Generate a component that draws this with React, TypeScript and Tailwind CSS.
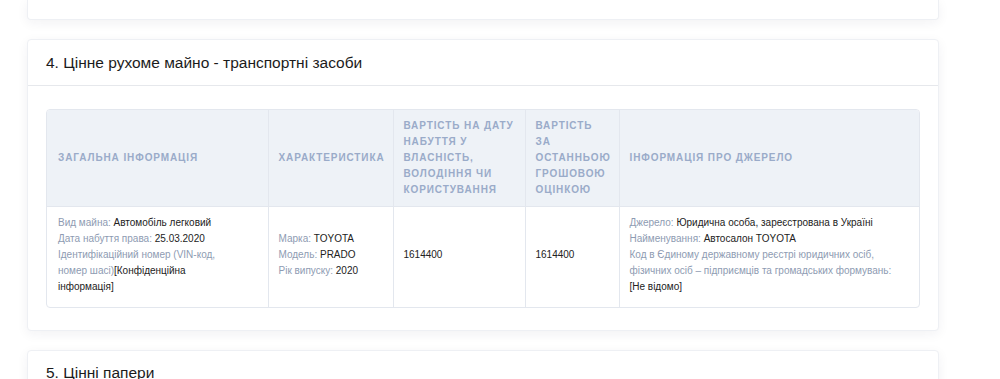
const labelCls = 'text-[#8e9bb2]';
const valueCls = 'text-[#222]';

const Line = ({ label, value }: { label: string; value: string }) => (
	<div>
		<span className={labelCls}>{label}: </span>
		<span className={valueCls}>{value}</span>
	</div>
);

const headers = [
	'Загальна інформація',
	'Характеристика',
	'Вартість на дату набуття у власність, володіння чи користування',
	'Вартість за останньою грошовою оцінкою',
	'Інформація про джерело',
];

const Card = ({ title, children }: { title: string; children?: React.ReactNode }) => (
	<div className="ml-[27px] w-[912px] bg-white rounded-[4px] border border-[#eef0f4] shadow-[0_3px_12px_rgba(30,40,70,0.06)]">
		<div className="h-[46px] flex items-center px-[18px] border-b border-[#e6e8ec]">
			<h3 className="text-[15.5px] text-[#1b1b1b]">{title}</h3>
		</div>
		{children}
	</div>
);

const App = () => {
	return (
		<div className="min-h-screen bg-white font-['Liberation_Sans',Arial,sans-serif]">
			<div className="ml-[27px] w-[912px] h-[20px] bg-white rounded-b-[4px] border border-t-0 border-[#eef0f4] shadow-[0_3px_12px_rgba(30,40,70,0.06)]" />
			<div className="h-[19px]" />
			<Card title="4. Цінне рухоме майно - транспортні засоби">
				<div className="px-[18px] pt-[23px] pb-[22px]">
					<div className="border border-[#e3e7ee] rounded-[4px] overflow-hidden">
						<table className="w-full table-fixed border-collapse text-[10px] leading-4">
							<colgroup>
								<col className="w-[221px]" />
								<col className="w-[125px]" />
								<col className="w-[132px]" />
								<col className="w-[94px]" />
								<col />
							</colgroup>
							<thead>
								<tr className="bg-[#eef2f7] h-[96px]">
									{headers.map((h, i) => (
										<th
											key={i}
											className={`text-left align-middle font-bold uppercase tracking-[0.9px] text-[#9aabc9] px-[10px] py-2 ${i > 0 ? 'border-l border-[#e3e7ee]' : 'pl-[11px]'}`}
										>
											{h}
										</th>
									))}
								</tr>
							</thead>
							<tbody>
								<tr className="h-[100px] border-t border-[#e3e7ee]">
									<td className="align-middle pl-[11px] pr-[24px] pt-[6px] pb-[10px]">
										<Line label="Вид майна" value="Автомобіль легковий" />
										<Line label="Дата набуття права" value="25.03.2020" />
										<div>
											<span className={labelCls}>Ідентифікаційний номер (VIN-код, номер шасі)</span>
											<span className={valueCls}>[Конфіденційна інформація]</span>
										</div>
									</td>
									<td className="align-middle px-[10px] pt-[6px] pb-[10px] border-l border-[#e3e7ee]">
										<Line label="Марка" value="TOYOTA" />
										<Line label="Модель" value="PRADO" />
										<Line label="Рік випуску" value="2020" />
									</td>
									<td className="align-middle px-[10px] pt-[6px] pb-[10px] border-l border-[#e3e7ee] text-[#222]">1614400</td>
									<td className="align-middle px-[10px] pt-[6px] pb-[10px] border-l border-[#e3e7ee] text-[#222]">1614400</td>
									<td className="align-middle px-[10px] pt-[6px] pb-[10px] border-l border-[#e3e7ee]">
										<Line label="Джерело" value="Юридична особа, зареєстрована в Україні" />
										<Line label="Найменування" value="Автосалон TOYOTA" />
										<div className={labelCls}>
											Код в Єдиному державному реєстрі юридичних осіб, фізичних осіб – підприємців та громадських формувань:
										</div>
										<div className={valueCls}>[Не відомо]</div>
									</td>
								</tr>
							</tbody>
						</table>
					</div>
				</div>
			</Card>
			<div className="h-[19px]" />
			<Card title="5. Цінні папери">
				<div className="h-[80px]" />
			</Card>
		</div>
	);
};

export default App;
